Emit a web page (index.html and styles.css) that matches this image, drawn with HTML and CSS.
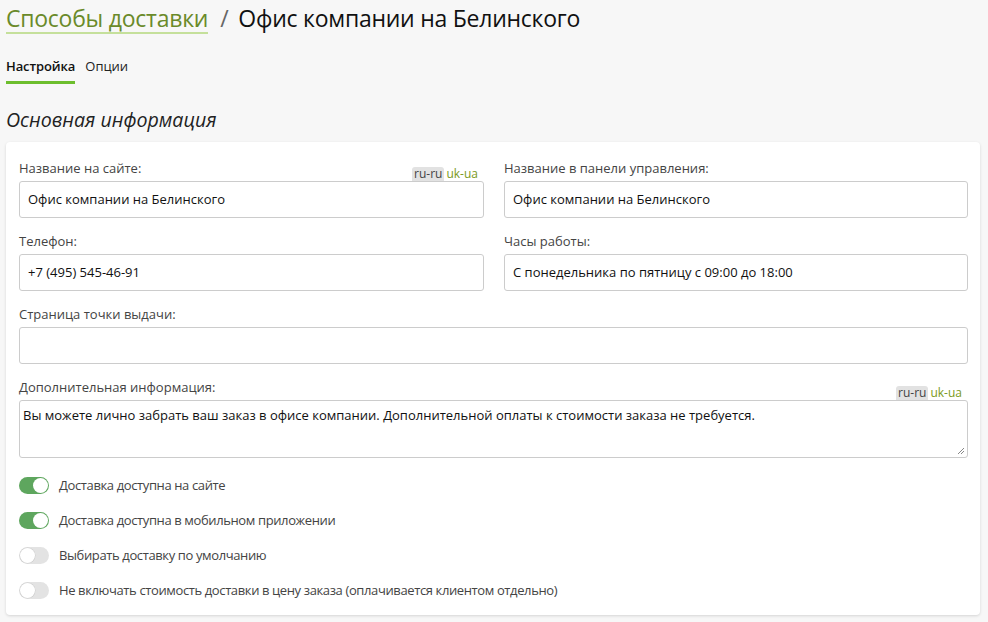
FILE: index.html
```html
<!DOCTYPE html>
<html lang="ru">
<head>
<meta charset="utf-8">
<title>Офис компании на Белинского</title>
<link rel="stylesheet" href="styles.css">
</head>
<body>
<div class="page">
  <h1 class="title"><a class="crumb">Способы доставки</a><span class="sep">/</span><span class="current">Офис компании на Белинского</span></h1>
  <nav class="tabs">
    <span class="tab active">Настройка</span>
    <span class="tab">Опции</span>
  </nav>
  <h2 class="section">Основная информация</h2>
  <div class="card">
    <div class="grid">
      <div class="field">
        <div class="label-row"><span class="label">Название на сайте:</span><span class="langs"><span class="lang on">ru-ru</span><span class="lang">uk-ua</span></span></div>
        <div class="input">Офис компании на Белинского</div>
      </div>
      <div class="field">
        <div class="label-row"><span class="label">Название в панели управления:</span></div>
        <div class="input">Офис компании на Белинского</div>
      </div>
      <div class="field">
        <div class="label-row"><span class="label">Телефон:</span></div>
        <div class="input">+7 (495) 545-46-91</div>
      </div>
      <div class="field">
        <div class="label-row"><span class="label">Часы работы:</span></div>
        <div class="input">С понедельника по пятницу с 09:00 до 18:00</div>
      </div>
      <div class="field wide">
        <div class="label-row"><span class="label">Страница точки выдачи:</span></div>
        <div class="input"></div>
      </div>
      <div class="field wide">
        <div class="label-row"><span class="label">Дополнительная информация:</span><span class="langs"><span class="lang on">ru-ru</span><span class="lang">uk-ua</span></span></div>
        <div class="textarea">Вы можете лично забрать ваш заказ в офисе компании. Дополнительной оплаты к стоимости заказа не требуется.<svg class="grip" width="8" height="8" viewBox="0 0 8 8"><path d="M7 1L1 7M7 4L4 7" stroke="#888" stroke-width="1"/></svg></div>
      </div>
    </div>
    <div class="switches">
      <div class="switch-row"><span class="switch on"><span class="knob"></span></span><span class="switch-label">Доставка доступна на сайте</span></div>
      <div class="switch-row"><span class="switch on"><span class="knob"></span></span><span class="switch-label">Доставка доступна в мобильном приложении</span></div>
      <div class="switch-row"><span class="switch"><span class="knob"></span></span><span class="switch-label">Выбирать доставку по умолчанию</span></div>
      <div class="switch-row"><span class="switch"><span class="knob"></span></span><span class="switch-label">Не включать стоимость доставки в цену заказа (оплачивается клиентом отдельно)</span></div>
    </div>
  </div>
</div>
</body>
</html>
```
FILE: styles.css
```css
* { box-sizing: border-box; }
html, body { margin: 0; padding: 0; }
body {
  background: #f7f7f7;
  font-family: "Open Sans", "Noto Sans", sans-serif;
  color: #222;
  width: 988px;
  height: 622px;
  overflow: hidden;
}
.page { padding: 0 8px 0 6px; }
.title {
  margin: 0;
  padding-top: 3px;
  font-weight: 400;
  font-size: 23px;
  line-height: 30px;
  display: flex;
  align-items: baseline;
  letter-spacing: -0.25px;
}
.crumb {
  color: #6a8a2a;
  border-bottom: 2px solid #c5e09b;
  line-height: 28px;
}
.sep { color: #666; margin: 0 10px 0 12px; }
.current { color: #111; }
.tabs {
  display: flex;
  gap: 10px;
  margin-top: 23px;
  font-size: 13px;
}
.tab { padding-bottom: 6px; color: #222; border-bottom: 3px solid transparent; line-height: 18px; }
.tab.active { font-weight: 600; border-bottom-color: #6dbe2e; color: #111; letter-spacing: -0.1px; }
.section {
  margin: 23px 0 0;
  font-size: 19.6px;
  font-weight: 400;
  font-style: italic;
  color: #222;
  line-height: 26px;
}
.card {
  margin-top: 9px;
  background: #fff;
  border-radius: 4px;
  box-shadow: 0 1px 3px rgba(0,0,0,0.14);
  padding: 16px 12px 16px 13px;
  width: 974px;
  height: 473px;
}
.grid {
  display: grid;
  grid-template-columns: 465px 464px;
  column-gap: 20px;
  row-gap: 13px;
}
.field.wide { grid-column: 1 / 3; }
.label-row {
  display: flex;
  justify-content: space-between;
  align-items: flex-end;
  height: 23px;
  font-size: 13px;
  color: #444;
}
.label { line-height: 18px; padding-bottom: 4px; }
.langs { display: flex; font-size: 12px; line-height: 14px; margin-right: 4px; }
.lang { padding: 0 2px; color: #7a9a1a; border-radius: 3px 3px 0 0; }
.lang.on { background: #e2e2e2; color: #444; }
.input {
  height: 37px;
  border: 1px solid #ccc;
  border-radius: 3px;
  padding: 0 8px;
  font-size: 13px;
  line-height: 35px;
  color: #111;
}
.textarea {
  position: relative;
  height: 58px;
  border: 1px solid #ccc;
  border-radius: 3px;
  padding: 5px 3px;
  font-size: 13px;
  line-height: 18px;
  color: #111;
}
.grip { position: absolute; right: 2px; bottom: 2px; }
.switches {
  margin-top: 18px;
  display: flex;
  flex-direction: column;
  gap: 17px;
}
.switch-row {
  display: flex;
  align-items: center;
  gap: 10px;
  height: 18px;
  font-size: 13px;
  color: #444;
  letter-spacing: -0.38px;
}
.switch {
  width: 30px;
  height: 17px;
  border-radius: 9px;
  background: #e3e3e3;
  position: relative;
  flex: none;
}
.switch .knob {
  position: absolute;
  top: 1px;
  left: 1px;
  width: 15px;
  height: 15px;
  border-radius: 50%;
  background: #fff;
  box-shadow: 0 0 0 0.5px #ccc;
}
.switch.on { background: #5ea65e; }
.switch.on .knob { left: 14px; box-shadow: none; }
```
